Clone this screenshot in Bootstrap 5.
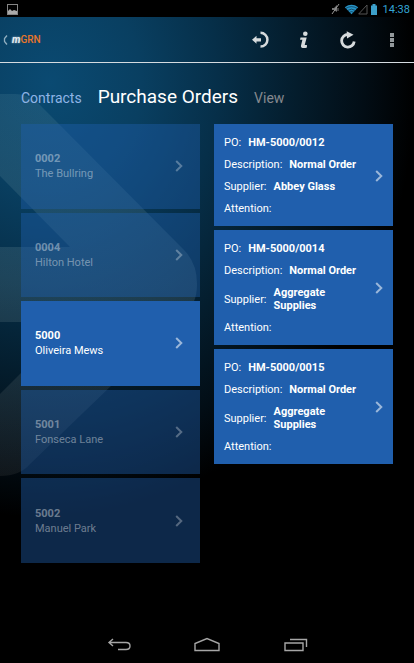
<!DOCTYPE html>
<html lang="en">
<head>
<meta charset="utf-8">
<meta name="viewport" content="width=device-width, initial-scale=1">
<title>mGRN - Purchase Orders</title>
<link href="https://cdn.jsdelivr.net/npm/bootstrap@5.3.0/dist/css/bootstrap.min.css" rel="stylesheet">
<style>
body{font-family:Roboto,"Liberation Sans",sans-serif;font-size:11px;line-height:15px;color:#fff;background:#000}
svg{display:block;flex:none}
button{background:none;border:0;padding:0}
a{text-decoration:none}
.statusbar{height:17px;padding:1px 4px 0 7px;background:#000}
.clock{font-size:11px;color:#33a5d6;margin-left:5px}
.app-area{position:relative;isolation:isolate;background:radial-gradient(ellipse 365px 435px at 50px 66px,#0a4a72 0%,#093f61 25%,#062f49 46%,#041d2d 67%,#020d15 86%,#000 100%)}
.backdrop{position:absolute;left:0;top:77px;z-index:-1}
.appbar{height:46px;padding:0 12px 0 3px;border-bottom:1px solid #d5dbe0}
.brand{font-size:10px;line-height:12px;color:#e8752a;gap:4px;font-weight:500}
.brand em{font-weight:700;color:#e6edf2;text-shadow:0 0 2px #b9c7d1}
.actions{gap:24px}
.actions button{display:grid;place-items:center;width:20px}
.tabs{padding:21px 21px 0;gap:16px;font-size:14px;line-height:26px}
.tabs a{color:#8fb4e6}
.tabs .current{color:#fff;font-size:19px}
.tabs .later{color:#85898f}
.columns{padding:13px 21px 40px;gap:14px}
.column{flex:1 1 0;min-width:0;gap:4px}
.sites{display:grid;grid-auto-rows:1fr;min-height:439px}
.tile{background:#205fad;color:#fff;text-align:left}
.site{padding:0 17px 0 14px}
.faded{background:rgba(32,95,173,.42);color:rgba(255,255,255,.4)}
.order{padding:12px 10px 11px;line-height:13px}
.order dl{display:grid;gap:9px}
.order dl div{gap:7px}
.order dt{font-weight:400}
.order dd{font-weight:700}
.chevron{opacity:.55}
.faded .chevron{opacity:.75}
.navkeys{height:36px;gap:62px}
</style>
<script src="https://cdn.jsdelivr.net/npm/bootstrap@5.3.0/dist/js/bootstrap.bundle.min.js"></script>
</head>
<body>
<svg width="0" height="0" class="position-absolute" aria-hidden="true">
<symbol id="chev" viewBox="0 0 8 12"><path d="M1.2 1 6.3 6 1.2 11" fill="none" stroke="currentColor" stroke-width="2"/></symbol>
</svg>
<div class="d-flex flex-column min-vh-100">
<div class="statusbar d-flex align-items-center justify-content-between">
<svg width="11" height="11" viewBox="0 0 11 11"><rect x=".5" y=".5" width="10" height="10" fill="none" stroke="#858585"/><path d="M1 10V7l2-2 1 1 1 1 2-1 3 1v3z" fill="#aaa"/></svg>
<div class="d-flex align-items-center">
<svg width="9" height="10" viewBox="0 0 9 10"><path d="M1 4h2l3-3v7L3 6H1z" fill="#777"/><path d="M8 0 1 10" stroke="#999"/><path d="M7 4v3" stroke="#777"/></svg>
<svg class="ms-1" width="34" height="11" viewBox="0 0 34 11"><path d="M.8 3.200Q7.500 -1.500 14.200 3.200L7.500 10.300z" fill="#2794c8"/><path d="M2 4.300Q7.500 1 13 4.300M4 6.300Q7.500 4 11 6.300M5.500 8.300Q7.500 7 9.500 8.300" fill="none" stroke="#06202d" stroke-width=".6"/><path d="M14.700 10h8.300V1z" fill="none" stroke="#555"/><path d="M27 1.500h1.500V0h3v1.500H33V11h-6z" fill="#3c9fc9"/></svg>
<span class="clock">14:38</span>
</div>
</div>
<div class="app-area d-flex flex-column flex-fill">
<svg class="backdrop" width="200" height="384" viewBox="0 0 200 384" aria-hidden="true"><defs><linearGradient id="fade" x2="0" y2="1"><stop offset="0" stop-color="#6d9eac" stop-opacity=".16"/><stop offset=".5" stop-color="#809da3" stop-opacity=".2"/><stop offset="1" stop-color="#808080" stop-opacity=".12"/></linearGradient></defs><path d="M0 0H15Q28 0 38 9L184 156Q197 169 197 190T184 220L112 291 30 370Q20 382 0 382V300L72 228H0V153H70L0 82z" fill="url(#fade)"/></svg>
<header class="appbar d-flex align-items-center justify-content-between">
<a href="#" class="brand d-flex align-items-center" aria-label="Back, mGRN"><svg width="5" height="10" viewBox="0 0 5 10"><path d="M4 .5 1.500 3.500v3L4 9.500" fill="none" stroke="#91afc0" stroke-width="1.300"/></svg><span><em>m</em>GRN</span></a>
<div class="actions d-flex align-items-center">
<button aria-label="Sign out"><svg width="20" height="20" viewBox="0 0 20 20"><path d="M10.500 2.800a6.900 6.900 0 1 1 0 13.800" fill="none" stroke="#d7dbdd" stroke-width="2.500"/><path d="M2 9.800 6.500 5.800V8.200H11v3.200H6.500V13.800z" fill="#d7dbdd"/></svg></button>
<button aria-label="Information"><svg width="20" height="20" viewBox="0 0 20 20"><circle cx="11.300" cy="3.700" r="2.300" fill="#d7dbdd"/><path d="M6.500 7.500h6.200l-2 7.500h2.200v2.500c-2.300 1-6 1-6-1.500l1.500-6.200H6z" fill="#d7dbdd"/></svg></button>
<button aria-label="Refresh"><svg width="20" height="20" viewBox="0 0 20 20"><path d="M10 4.500A6.300 6.300 0 1 0 16.200 11.500" fill="none" stroke="#d7dbdd" stroke-width="2.800"/><path d="M8.700 1.200 15.500 4.800 9 8.500z" fill="#d7dbdd"/></svg></button>
<button aria-label="More options"><svg width="4" height="16" viewBox="0 0 4 16"><path d="M0 1h4v4H0zM0 6h4v4H0zM0 11h4v4H0z" fill="#93999c"/></svg></button>
</div>
</header>
<nav class="tabs d-flex align-items-baseline">
<a href="#">Contracts</a><a href="#" class="current" aria-current="page">Purchase Orders</a><a href="#" class="later">View</a>
</nav>
<main class="columns d-flex align-items-start">
<div class="column sites">
<button class="tile site faded d-flex align-items-center justify-content-between"><span><b class="d-block">0002</b>The Bullring</span><svg class="chevron" width="8" height="12"><use href="#chev"/></svg></button>
<button class="tile site faded d-flex align-items-center justify-content-between"><span><b class="d-block">0004</b>Hilton Hotel</span><svg class="chevron" width="8" height="12"><use href="#chev"/></svg></button>
<button class="tile site d-flex align-items-center justify-content-between"><span><b class="d-block">5000</b>Oliveira Mews</span><svg class="chevron" width="8" height="12"><use href="#chev"/></svg></button>
<button class="tile site faded d-flex align-items-center justify-content-between"><span><b class="d-block">5001</b>Fonseca Lane</span><svg class="chevron" width="8" height="12"><use href="#chev"/></svg></button>
<button class="tile site faded d-flex align-items-center justify-content-between"><span><b class="d-block">5002</b>Manuel Park</span><svg class="chevron" width="8" height="12"><use href="#chev"/></svg></button>
</div>
<div class="column d-flex flex-column">
<a href="#" class="tile order d-flex align-items-center justify-content-between gap-2"><dl class="m-0">
<div class="d-flex align-items-center"><dt>PO:</dt><dd class="m-0">HM-5000/0012</dd></div>
<div class="d-flex align-items-center"><dt>Description:</dt><dd class="m-0">Normal Order</dd></div>
<div class="d-flex align-items-center"><dt>Supplier:</dt><dd class="m-0">Abbey Glass</dd></div>
<div class="d-flex align-items-center"><dt>Attention:</dt><dd class="m-0"></dd></div></dl><svg class="chevron" width="8" height="12"><use href="#chev"/></svg></a>
<a href="#" class="tile order d-flex align-items-center justify-content-between gap-2"><dl class="m-0">
<div class="d-flex align-items-center"><dt>PO:</dt><dd class="m-0">HM-5000/0014</dd></div>
<div class="d-flex align-items-center"><dt>Description:</dt><dd class="m-0">Normal Order</dd></div>
<div class="d-flex align-items-center"><dt>Supplier:</dt><dd class="m-0">Aggregate Supplies</dd></div>
<div class="d-flex align-items-center"><dt>Attention:</dt><dd class="m-0"></dd></div></dl><svg class="chevron" width="8" height="12"><use href="#chev"/></svg></a>
<a href="#" class="tile order d-flex align-items-center justify-content-between gap-2"><dl class="m-0">
<div class="d-flex align-items-center"><dt>PO:</dt><dd class="m-0">HM-5000/0015</dd></div>
<div class="d-flex align-items-center"><dt>Description:</dt><dd class="m-0">Normal Order</dd></div>
<div class="d-flex align-items-center"><dt>Supplier:</dt><dd class="m-0">Aggregate Supplies</dd></div>
<div class="d-flex align-items-center"><dt>Attention:</dt><dd class="m-0"></dd></div></dl><svg class="chevron" width="8" height="12"><use href="#chev"/></svg></a>
</div>
</main>
</div>
<footer class="navkeys d-flex align-items-center justify-content-center">
<button aria-label="Back"><svg width="26" height="16" viewBox="0 0 26 16"><path d="M7 2 3 5.500 7 9M3 5.500H20Q24 5.500 24 9T20 12.500H12" fill="none" stroke="#a6a6a6" stroke-width="1.400"/></svg></button>
<button aria-label="Home"><svg width="26" height="16" viewBox="0 0 26 16"><path d="M1 13.500V6.500L13 1.500 25 6.500V13.500z" fill="none" stroke="#a6a6a6" stroke-width="1.400"/></svg></button>
<button aria-label="Recent apps"><svg width="26" height="16" viewBox="0 0 26 16"><path d="M3 6H21V13.500H3zM8 2.500H24.500V10" fill="none" stroke="#a6a6a6" stroke-width="1.400"/></svg></button>
</footer>
</div>
</body>
</html>
